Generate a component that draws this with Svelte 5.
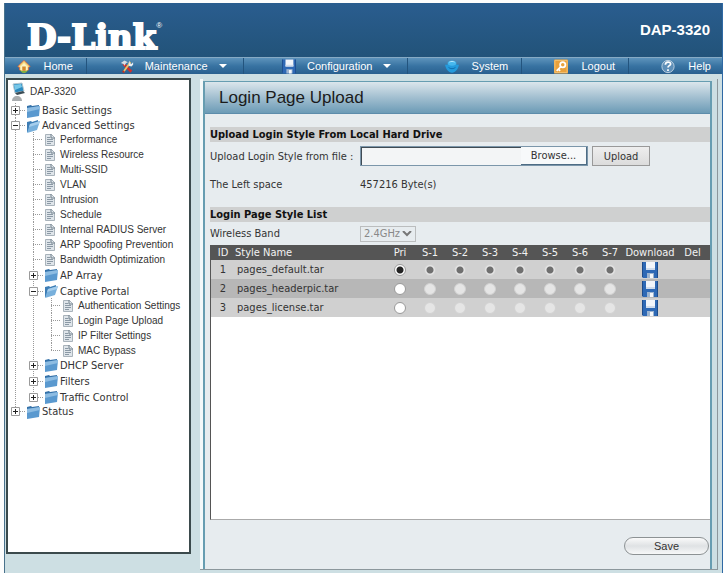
<script>
  const model = 'DAP-3320';

  const nav = [
    { label: 'Home', icon: 'home', size: 82 },
    { label: 'Maintenance', icon: 'tools', size: 157, menu: true },
    { label: 'Configuration', icon: 'disk', size: 165, menu: true },
    { label: 'System', icon: 'system', size: 114 },
    { label: 'Logout', icon: 'key', size: 107 },
    { label: 'Help', icon: 'help', size: 93 }
  ];

  const leaf = (label) => ({ label });

  const tree = [
    { label: 'Basic Settings', folder: true },
    {
      label: 'Advanced Settings',
      folder: true,
      children: [
        leaf('Performance'),
        leaf('Wireless Resource'),
        leaf('Multi-SSID'),
        leaf('VLAN'),
        leaf('Intrusion'),
        leaf('Schedule'),
        leaf('Internal RADIUS Server'),
        leaf('ARP Spoofing Prevention'),
        leaf('Bandwidth Optimization'),
        { label: 'AP Array', folder: true },
        {
          label: 'Captive Portal',
          folder: true,
          children: [
            leaf('Authentication Settings'),
            leaf('Login Page Upload'),
            leaf('IP Filter Settings'),
            leaf('MAC Bypass')
          ]
        },
        { label: 'DHCP Server', folder: true },
        { label: 'Filters', folder: true },
        { label: 'Traffic Control', folder: true }
      ]
    },
    { label: 'Status', folder: true }
  ];

  const files = ['pages_default.tar', 'pages_headerpic.tar', 'pages_license.tar'];
  const slots = ['Pri', 'S-1', 'S-2', 'S-3', 'S-4', 'S-5', 'S-6', 'S-7'];
  const columns = nav.map((n) => n.size + 'fr').join(' ');

  let selected = $state(slots.map(() => 0));
  let fileName = $state('');
</script>

{#snippet disk()}
  <svg viewBox="0 0 16 16" width="16" height="16" aria-hidden="true">
    <path d="M0 0h16v16H1l-1-1z" fill="#2e69b5" />
    <path d="M0 0h1v15H0zM15 0h1v16h-1z" fill="#1d4c8c" />
    <path d="M4 0h9v8H4z" fill="#f1f5fa" />
    <path d="M4 6h9v2H4z" fill="#cfdcec" />
    <path d="M5 11h7v5H5z" fill="#9db4cf" />
    <path d="M8 12h3v4H8z" fill="#f4f7fa" />
  </svg>
{/snippet}

{#snippet navIcon(name)}
  {#if name === 'disk'}
    {@render disk()}
  {:else}
    <svg viewBox="0 0 16 16" width="16" height="16" aria-hidden="true">
      {#if name === 'home'}
        <path d="M8 1 1 8l2 1v3l5 3 5-3V9l2-1z" fill="#f6d97a" stroke="#e2683c" />
        <path d="M8 4 4 8v4l4 2 4-2V8z" fill="#fbf4c4" />
        <path d="M6 8h4v5H6z" fill="#d58a2c" />
        <path d="M3 12l3 3h4l3-3-3 1H6z" fill="#79b543" />
      {:else if name === 'tools'}
        <path d="M4 5 13 14" stroke="#d22f2b" stroke-width="3" />
        <path d="M1 4 5 1l4 2-2 1-2 3-1-2z" fill="#d9dee2" />
        <path d="M12 3 4 14" stroke="#e9c46b" stroke-width="2" />
        <path d="M11 1v3l2 1 2-2v3l-2 2-3-1V3z" fill="#e8edf1" />
        <path d="M3 13l2 2" stroke="#bd3524" stroke-width="2" />
      {:else if name === 'system'}
        <path d="M0 6c2 0 3-1 5-1h6c2 0 3 1 5 1-1 5-4 9-8 9S1 11 0 6z" fill="#249bdd" />
        <path d="M3 4c0-2 3-3 5-3s5 1 5 3-2 3-5 3-5-1-5-3z" fill="#45b7ee" />
        <path d="M5 3c2-1 4-1 6 0" stroke="#c2edff" fill="none" />
        <path d="M4 9c2 2 6 2 8 0" stroke="#0c69a9" fill="none" />
      {:else if name === 'key'}
        <rect width="16" height="16" rx="1" fill="#e9a13b" />
        <path d="M1 1h14v14H1z" fill="none" stroke="#f6c77a" />
        <circle cx="10" cy="6" r="3" fill="none" stroke="#fff" stroke-width="2" />
        <path d="M8 8l-5 5M5 11l2 2" stroke="#fff" stroke-width="2" />
      {:else}
        <circle cx="8" cy="8" r="7" fill="#5e8fb8" stroke="#c8d8e5" />
        <path d="M5 6c0-4 6-4 6-1 0 2-3 2-3 4M8 11v2" fill="none" stroke="#fff" stroke-width="2" />
      {/if}
    </svg>
  {/if}
{/snippet}

{#snippet branch(nodes)}
  <ul>
    {#each nodes as node}
      <li>
        <div class="node" class:leaf={!node.folder}>
          {#if node.folder}
            <button class="toggle" aria-label="Toggle {node.label}">
              <svg viewBox="0 0 9 9" width="9" height="9" aria-hidden="true">
                <path d="M.5.5h8v8h-8z" fill="#fff" stroke="#9a9a9a" />
                <path d={node.children ? 'M2 4.5h5' : 'M2 4.5h5M4.5 2v5'} stroke="#222" />
              </svg>
            </button>
            <span class="stub"></span>
            <svg class="icon" viewBox="0 0 14 14" width="14" height="14" aria-hidden="true">
              {#if node.children}
                <path d="M1 3l4-1 1 1 6-2v4L2 13H1z" fill="#3d7db5" />
                <path d="M4 5l10-3-3 9-10 3z" fill="#78b0dc" />
                <path d="M4 5l10-3-1 3L3 8z" fill="#a5cdec" />
              {:else}
                <path d="M1 2l4-1 1 1 7-1v2L1 5z" fill="#3471a8" />
                <path d="M1 4l13-2-1 10-12 2z" fill="#5a99cf" />
                <path d="M1 4l13-2v3L1 8z" fill="#8dbce2" />
              {/if}
            </svg>
          {:else}
            <span class="stub"></span>
            <svg class="icon" viewBox="0 0 10 12" width="10" height="12" aria-hidden="true">
              <path d="M.5.5h6l3 3v8h-9z" fill="#dfe5ea" stroke="#a9b3bb" />
              <path d="M6 0v4h4" fill="none" stroke="#71808c" />
              <path d="M2 3.5h3M2 5.5h6M2 7.5h6M2 9.5h4" stroke="#8b99a5" />
            </svg>
          {/if}
          <a href="#{node.label}">{node.label}</a>
        </div>
        {#if node.children}
          {@render branch(node.children)}
        {/if}
      </li>
    {/each}
  </ul>
{/snippet}

<div class="page">
  <header>
    <div class="logo">D-Link<sup>®</sup></div>
    <div class="model">{model}</div>
  </header>

  <nav style="grid-template-columns: {columns}">
    {#each nav as item}
      <a href="#{item.icon}" class:menu={item.menu}>
        {@render navIcon(item.icon)}
        <span>{item.label}</span>
        {#if item.menu}<i class="caret"></i>{/if}
      </a>
    {/each}
  </nav>

  <div class="body">
    <aside>
      <div class="root">
        <svg viewBox="0 0 16 20" width="16" height="20" aria-hidden="true">
          <path d="M2 2l9-1 2 8-9 2z" fill="#2b8ac0" stroke="#b8c8d0" />
          <path d="M3 3l7-1 1 3-7 3z" fill="#77c7e8" />
          <path d="M4 11l8-2 2 2-8 2z" fill="#3c4c55" />
          <path d="M1 19c0-3 2-5 5-5s5 2 5 5z" fill="#a9adaf" />
        </svg>
        <a href="#root">{model}</a>
      </div>
      {@render branch(tree)}
    </aside>

    <main>
      <div class="panel">
        <h1>Login Page Upload</h1>

        <div class="content">
          <h2>Upload Login Style From Local Hard Drive</h2>
          <div class="field">
            <label for="file">Upload Login Style from file :</label>
            <div class="file">
              <input id="file" type="text" bind:value={fileName} />
              <button>Browse...</button>
            </div>
            <button class="upload">Upload</button>
          </div>
          <div class="field space">
            <span class="name">The Left space</span>
            <span>457216 Byte(s)</span>
          </div>

          <h2>Login Page Style List</h2>
          <div class="field band">
            <label for="band">Wireless Band</label>
            <div class="select">
              <select id="band" disabled>
                <option>2.4GHz</option>
              </select>
              <svg viewBox="0 0 10 6" width="10" height="6" aria-hidden="true">
                <path d="M1 0l4 4 4-4" fill="none" stroke="#777" stroke-width="2" />
              </svg>
            </div>
          </div>

          <div class="list">
            <table>
              <thead>
                <tr>
                  <th class="id">ID</th>
                  <th class="style">Style Name</th>
                  {#each slots as slot}
                    <th class="slot">{slot}</th>
                  {/each}
                  <th class="download">Download</th>
                  <th class="del">Del</th>
                </tr>
              </thead>
              <tbody>
                {#each files as file, row}
                  <tr>
                    <td class="id">{row + 1}</td>
                    <td class="style">{file}</td>
                    {#each slots as slot, col}
                      <td>
                        <input
                          type="radio"
                          name={slot}
                          value={row}
                          aria-label="{slot} {file}"
                          disabled={col > 0}
                          bind:group={selected[col]}
                        />
                      </td>
                    {/each}
                    <td><button class="get" aria-label="Download {file}">{@render disk()}</button></td>
                    <td></td>
                  </tr>
                {/each}
              </tbody>
            </table>
          </div>
        </div>

        <div class="actions">
          <button class="save">Save</button>
        </div>
      </div>
    </main>
  </div>
</div>

<style>
  :global(body) {
    background: #fdfdfd;
  }

  :global(*) {
    box-sizing: border-box;
  }

  .page {
    display: flex;
    flex-direction: column;
    min-height: calc(100vh - 3px);
    margin: 3px 0 0 4px;
    border-left: 1px solid #49728c;
    border-right: 1px solid #2f69a4;
    background: #cddfe3;
    color: #333;
    font-family: 'DejaVu Sans Condensed', Tahoma, sans-serif;
    font-size: 11px;
  }

  a {
    color: inherit;
    text-decoration: none;
  }

  button,
  input,
  select {
    font: inherit;
    color: inherit;
    margin: 0;
  }

  header {
    display: flex;
    justify-content: space-between;
    align-items: center;
    height: 54px;
    padding: 0 12px 0 22px;
    background: linear-gradient(#2a5d8f, #225379);
    color: #fff;
  }

  .logo {
    display: flex;
    align-items: flex-start;
    padding-top: 14px;
    font: bold 34px/36px 'DejaVu Serif', serif;
    -webkit-text-stroke: 2px #fff;
  }

  .logo sup {
    font: 8px/14px 'Liberation Sans', sans-serif;
    -webkit-text-stroke: 0;
  }

  .model {
    font: bold 15px/16px 'Liberation Sans', sans-serif;
  }

  nav {
    display: grid;
    height: 17px;
    background: linear-gradient(#5d93bb, #3873a2 50%, #29608f);
    border-top: 1px solid #86aac4;
    color: #fff;
    font: 11px/16px 'Liberation Sans', sans-serif;
  }

  nav a {
    display: flex;
    justify-content: flex-end;
    align-items: center;
    gap: 13px;
    padding-right: 13px;
    border-right: 1px solid #23547e;
  }

  nav a.menu {
    gap: 11px;
    padding-right: 16px;
  }

  nav a:last-child {
    border-right: 0;
    padding-right: 11px;
  }

  nav svg {
    width: 14px;
    height: 15px;
  }

  .caret {
    border: 4px solid transparent;
    border-top-color: #fff;
    border-bottom: 0;
  }

  .body {
    display: flex;
    flex: 1;
  }

  aside {
    flex: 0 0 185px;
    margin: 4px 9px 19px 1px;
    border: 2px solid #3b4a4c;
    background: #fff;
    padding-left: 3px;
    font: 10px/15px 'Liberation Sans', sans-serif;
    white-space: nowrap;
  }

  .root {
    display: flex;
    align-items: center;
    gap: 3px;
    height: 23px;
  }

  ul {
    list-style: none;
    margin: 0;
    padding: 0;
  }

  li {
    background: repeating-linear-gradient(#999 0 1px, #fff 1px 2px) 4px 0 / 1px 100% no-repeat;
  }

  li:last-child {
    background-size: 1px 8px;
  }

  li ul {
    margin: -1px 0;
    padding-left: 18px;
  }

  .node {
    display: flex;
    align-items: center;
    height: 15px;
  }

  li li .node:not(.leaf) {
    height: 16px;
  }

  .node:not(.leaf) a {
    font-family: 'DejaVu Sans Condensed', sans-serif;
    font-size: 11px;
  }

  .toggle {
    display: flex;
    padding: 0;
    border: 0;
    background: none;
  }

  .stub {
    width: 6px;
    height: 1px;
    background: repeating-linear-gradient(90deg, #999 0 1px, #fff 1px 2px);
  }

  .leaf .stub {
    width: 10px;
    margin: 0 2px 0 4px;
  }

  .icon {
    margin-right: 2px;
  }

  .leaf .icon {
    margin-right: 5px;
  }

  main {
    display: flex;
    flex: 1;
    min-width: 0;
    margin: 5px 4px 3px 0;
    padding: 2px 5px 0 3px;
    border: solid #8c979c;
    border-width: 0 1px 1px 0;
    background: linear-gradient(90deg, #f4f9fa 3px, transparent 3px);
  }

  .panel {
    display: flex;
    flex-direction: column;
    flex: 1;
    min-width: 0;
    border: 2px solid #679db1;
    border-width: 1px 2px 0;
    background: #e7ecef;
  }

  h1 {
    margin: 0;
    padding: 0 14px;
    border-bottom: 1px solid #5c8cab;
    background: linear-gradient(#dbe6ec, #a2bfd0 50%, #6c9bb6);
    color: #1b1b1b;
    font: 17px/31px 'Liberation Sans', sans-serif;
  }

  .content {
    display: flex;
    flex-direction: column;
    flex: 1;
    padding: 13px 0 0 5px;
  }

  h2 {
    margin: 0;
    background: #cfd0d0;
    color: #111;
    font-size: 11px;
    line-height: 15px;
  }

  .field {
    display: flex;
    align-items: center;
    height: 28px;
  }

  .field label,
  .field .name {
    flex: 0 0 150px;
  }

  .space {
    height: 37px;
    padding-bottom: 9px;
  }

  .band {
    height: 23px;
  }

  .file {
    display: flex;
    width: 228px;
    height: 20px;
    margin-right: 4px;
    border: 1px solid #7b96aa;
    background: #f3f5f6;
  }

  .file input {
    flex: 1;
    min-width: 0;
    padding: 0 3px;
    border: solid #3f4b54;
    border-width: 1px 0 0 1px;
    background: none;
  }

  .file button {
    width: 66px;
    padding: 0;
    border: solid #4e6c84;
    border-width: 0 1px 1px 0;
    background: #f7f9fa;
  }

  .upload {
    width: 58px;
    height: 20px;
    padding: 0;
    border: 1px solid #999;
    background: linear-gradient(#eee, #dcdcdc);
  }

  .select {
    display: grid;
    align-items: center;
    width: 56px;
    height: 16px;
    border: 1px solid #bbbdbe;
  }

  .select select,
  .select svg {
    grid-area: 1 / 1;
  }

  .select svg {
    justify-self: end;
    margin-right: 3px;
    pointer-events: none;
  }

  select {
    appearance: none;
    padding: 0 3px;
    border: 0;
    background: none;
    color: #888;
    opacity: 1;
  }

  .list {
    flex: 1;
    border: solid #555;
    border-width: 0 0 1px 1px;
    border-bottom-color: #aaa;
    background: #fff;
  }

  table {
    width: 100%;
    border-collapse: collapse;
    table-layout: fixed;
  }

  thead {
    background: #555;
    color: #f2f2f2;
  }

  th {
    height: 15px;
    padding: 0;
    font-weight: normal;
    line-height: 15px;
    white-space: nowrap;
  }

  .id {
    width: 24px;
  }

  th.style {
    text-align: left;
  }

  .slot {
    width: 30px;
  }

  .download {
    width: 50px;
  }

  .del {
    width: 35px;
  }

  td {
    height: 19px;
    padding: 0;
    line-height: 18px;
    text-align: center;
  }

  td.style {
    padding-left: 2px;
    text-align: left;
  }

  tbody tr {
    background: #d0d0d0;
  }

  tbody tr:nth-child(2) {
    background: #b7b7b7;
  }

  input[type='radio'] {
    appearance: none;
    display: block;
    width: 12px;
    height: 12px;
    margin: 0 auto;
    border: 1px solid #999;
    border-radius: 50%;
    background: #fff;
  }

  input[type='radio']:checked {
    background: radial-gradient(circle, #222 3px, #fff 4px);
  }

  input[type='radio']:disabled {
    border-color: #d2d2d2;
    background: #e5e5e5;
  }

  input[type='radio']:disabled:checked {
    background: radial-gradient(circle, #707070 3px, #e4e4e4 4px);
  }

  .get {
    display: block;
    height: 16px;
    margin: 0 auto;
    padding: 0;
    border: 0;
    background: none;
  }

  .actions {
    display: flex;
    justify-content: flex-end;
    padding: 17px 1px 14px;
  }

  .save {
    width: 85px;
    height: 18px;
    padding: 0;
    border: 1px solid #8d9294;
    border-radius: 9px;
    background: linear-gradient(#fafafa, #dfe2e4 50%, #f7f8f8);
    font: 11px/14px 'Liberation Sans', sans-serif;
  }
</style>
